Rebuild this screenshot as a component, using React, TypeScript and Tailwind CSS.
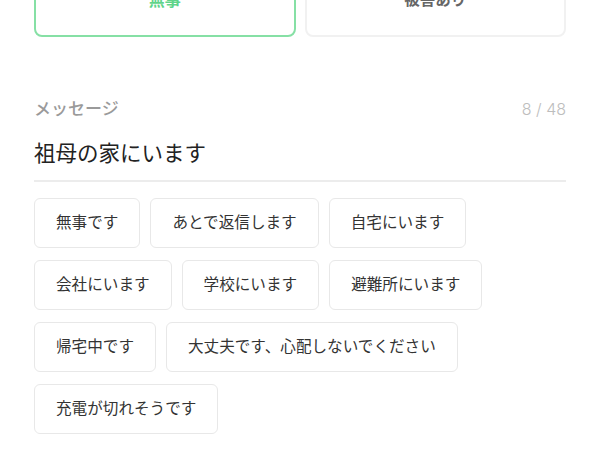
import React, { useState } from 'react';

const FONT = '[font-family:Inter,"Noto_Sans_CJK_JP",sans-serif]';

const presets = [
  '無事です',
  'あとで返信します',
  '自宅にいます',
  '会社にいます',
  '学校にいます',
  '避難所にいます',
  '帰宅中です',
  '大丈夫です、心配しないでください',
  '充電が切れそうです',
];

export default function App() {
  const [status, setStatus] = useState<'safe' | 'damaged'>('safe');
  const [message, setMessage] = useState('祖母の家にいます');

  return (
    <div className={`min-h-screen bg-white px-[34px] ${FONT}`}>
      {/* Status selector (scrolled partly out of view) */}
      <div className="-mt-[37px] grid grid-cols-2 gap-[9px]">
        <button
          onClick={() => setStatus('safe')}
          className={`h-[74px] rounded-[8px] border-2 text-[16px] font-semibold ${
            status === 'safe'
              ? 'border-[#86e0a5] text-[#5fd48a]'
              : 'border-[#f1f1f1] text-[#666666]'
          }`}
        >
          無事
        </button>
        <button
          onClick={() => setStatus('damaged')}
          className={`h-[74px] rounded-[8px] border-2 text-[15.5px] font-semibold ${
            status === 'damaged'
              ? 'border-[#86e0a5] text-[#5fd48a]'
              : 'border-[#f1f1f1] text-[#666666]'
          }`}
        >
          被害あり
        </button>
      </div>

      {/* Message */}
      <div className="mt-[60px] flex items-center justify-between">
        <span className="text-[17px] leading-[24px] font-medium text-[#9a9a9a]">メッセージ</span>
        <span className="text-[16px] leading-[24px] font-light text-[#bdbdbd]">{message.length} / 48</span>
      </div>
      <input
        value={message}
        onChange={(e) => setMessage(e.target.value.slice(0, 48))}
        className="mt-[17px] block w-full border-b-2 border-[#ececec] pb-[12px] text-[21.5px] leading-[30px] text-[#222222] outline-none"
      />

      {/* Preset chips */}
      <div className="mt-[16px] flex flex-wrap gap-x-[10px] gap-y-[12px]">
        {presets.map((p) => (
          <button
            key={p}
            onClick={() => setMessage(p)}
            className="h-[50px] rounded-[6px] border border-[#e8e8e8] px-[21px] text-[15.6px] text-[#333333]"
          >
            {p}
          </button>
        ))}
      </div>
    </div>
  );
}
